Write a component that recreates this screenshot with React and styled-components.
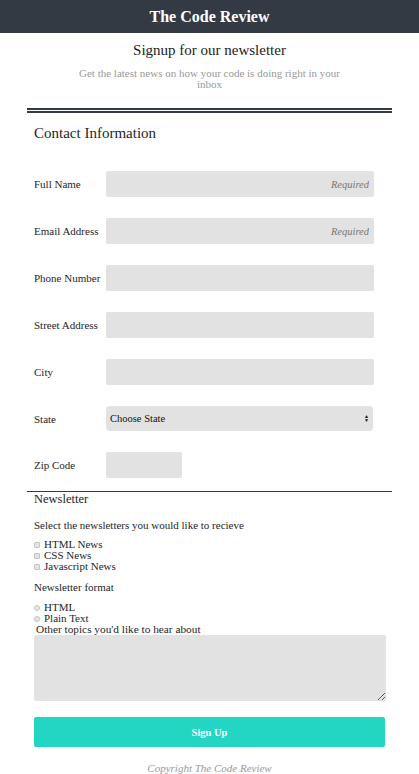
import React from 'react'
import styled, {createGlobalStyle} from 'styled-components'

const Global = createGlobalStyle`
  html, body { margin: 0; padding: 0; background: #fff; }
  body { font-family: "Liberation Serif", "DejaVu Serif", serif; color: #1e1e2a; }
  * { box-sizing: border-box; }
`

const Header = styled.header`
  height: 33px;
  background: #333a44;
  color: #fff;
  display: flex;
  align-items: center;
  justify-content: center;
  font-weight: bold;
  font-size: 16px;
`

const Intro = styled.div`
  text-align: center;
  padding: 9px 70px 0;
`

const Title = styled.h2`
  margin: 0;
  font-size: 15px;
  font-weight: normal;
  color: #222;
`

const Sub = styled.p`
  margin: 9px 0 0;
  font-size: 11px;
  line-height: 11px;
  color: #999;
`

const Form = styled.form`
  margin: 18px 27px 0;
  border-top: 5px double #333a44;
`

const Section = styled.div`
  padding: 12px 7px 0;
`

const Heading = styled.h3`
  margin: 0;
  font-size: 15px;
  font-weight: normal;
`

const Rows = styled.div`
  display: flex;
  flex-direction: column;
  gap: 21px;
  padding: 29px 11px 13px 0;
`

const Row = styled.label`
  display: flex;
  align-items: center;
  font-size: 11px;
`

const LabelText = styled.span`
  width: 72px;
  flex: none;
`

const Input = styled.input`
  height: 26px;
  width: ${p => p.$w || '268px'};
  border: none;
  border-radius: 2px;
  background: #e2e2e2;
  font-family: inherit;
  font-size: 10.5px;
  font-style: italic;
  text-align: right;
  padding: 0 5px;
  &::placeholder { color: #777; }
`

const Select = styled.div`
  height: 25px;
  width: 267px;
  border-radius: 4px;
  background: #e2e2e2;
  display: flex;
  align-items: center;
  justify-content: space-between;
  padding: 0 4px;
  font-size: 10.5px;
  color: #111;
`

const Arrows = styled.span`
  display: flex;
  flex-direction: column;
  font-size: 5px;
  line-height: 4px;
`

const Newsletter = styled.div`
  border-top: 1px solid #333a44;
  padding: 0 7px 0;
`

const Small = styled.p`
  margin: ${p => p.$m || '0'};
  font-size: ${p => p.$size || '11px'};
`

const Options = styled.div`
  display: flex;
  flex-direction: column;
  margin-top: ${p => p.$top || '10px'};
`

const Option = styled.label`
  display: flex;
  align-items: center;
  gap: 4px;
  font-size: 11px;
  line-height: 11px;
`

const Box = styled.span`
  width: 6px;
  height: 6px;
  border: 1px solid #c4c4c4;
  border-radius: ${p => (p.$round ? '50%' : '1px')};
  background: #e4e4e4;
  margin-top: 1px;
`

const TopicLabel = styled.div`
  font-size: 11.3px;
  padding-left: 2px;
  line-height: 11px;
`

const Textarea = styled.textarea`
  display: block;
  width: 352px;
  height: 66px;
  border: none;
  border-radius: 2px;
  background: #e2e2e2;
  margin-top: 0;
  resize: both;
`

const Button = styled.button`
  display: block;
  width: 351px;
  height: 30px;
  margin-top: 16px;
  border: none;
  border-radius: 2px;
  background: #23d6c4;
  color: #fff;
  font-family: inherit;
  font-weight: bold;
  font-size: 10.5px;
`

const Footer = styled.footer`
  text-align: center;
  font-style: italic;
  color: #999;
  font-size: 11px;
  padding: 15px 0 0;
`

const fields = [
  {label: 'Full Name', ph: 'Required'},
  {label: 'Email Address', ph: 'Required'},
  {label: 'Phone Number'},
  {label: 'Street Address'},
  {label: 'City'},
]

const App = () => {
  return (
    <>
      <Global/>
      <Header>The Code Review</Header>
      <Intro>
        <Title>Signup for our newsletter</Title>
        <Sub>Get the latest news on how your code is doing right in your inbox</Sub>
      </Intro>
      <Form onSubmit={e => e.preventDefault()}>
        <Section>
          <Heading>Contact Information</Heading>
          <Rows>
            {fields.map(f => (
              <Row key={f.label}>
                <LabelText>{f.label}</LabelText>
                <Input placeholder={f.ph}/>
              </Row>
            ))}
            <Row>
              <LabelText>State</LabelText>
              <Select>
                <span>Choose State</span>
                <Arrows><span>▲</span><span>▼</span></Arrows>
              </Select>
            </Row>
            <Row>
              <LabelText>Zip Code</LabelText>
              <Input $w="76px"/>
            </Row>
          </Rows>
        </Section>
        <Newsletter>
          <Small $size="12.5px">Newsletter</Small>
          <Small $m="12px 0 0">Select the newsletters you would like to recieve</Small>
          <Options $top="8px">
            {['HTML News', 'CSS News', 'Javascript News'].map(n => (
              <Option key={n}><Box/>{n}</Option>
            ))}
          </Options>
          <Small $m="9px 0 0">Newsletter format</Small>
          <Options $top="9px">
            {['HTML', 'Plain Text'].map(n => (
              <Option key={n}><Box $round/>{n}</Option>
            ))}
          </Options>
          <TopicLabel>Other topics you'd like to hear about</TopicLabel>
          <Textarea/>
          <Button>Sign Up</Button>
          <Footer>Copyright The Code Review</Footer>
        </Newsletter>
      </Form>
    </>
  )
}

export default App
